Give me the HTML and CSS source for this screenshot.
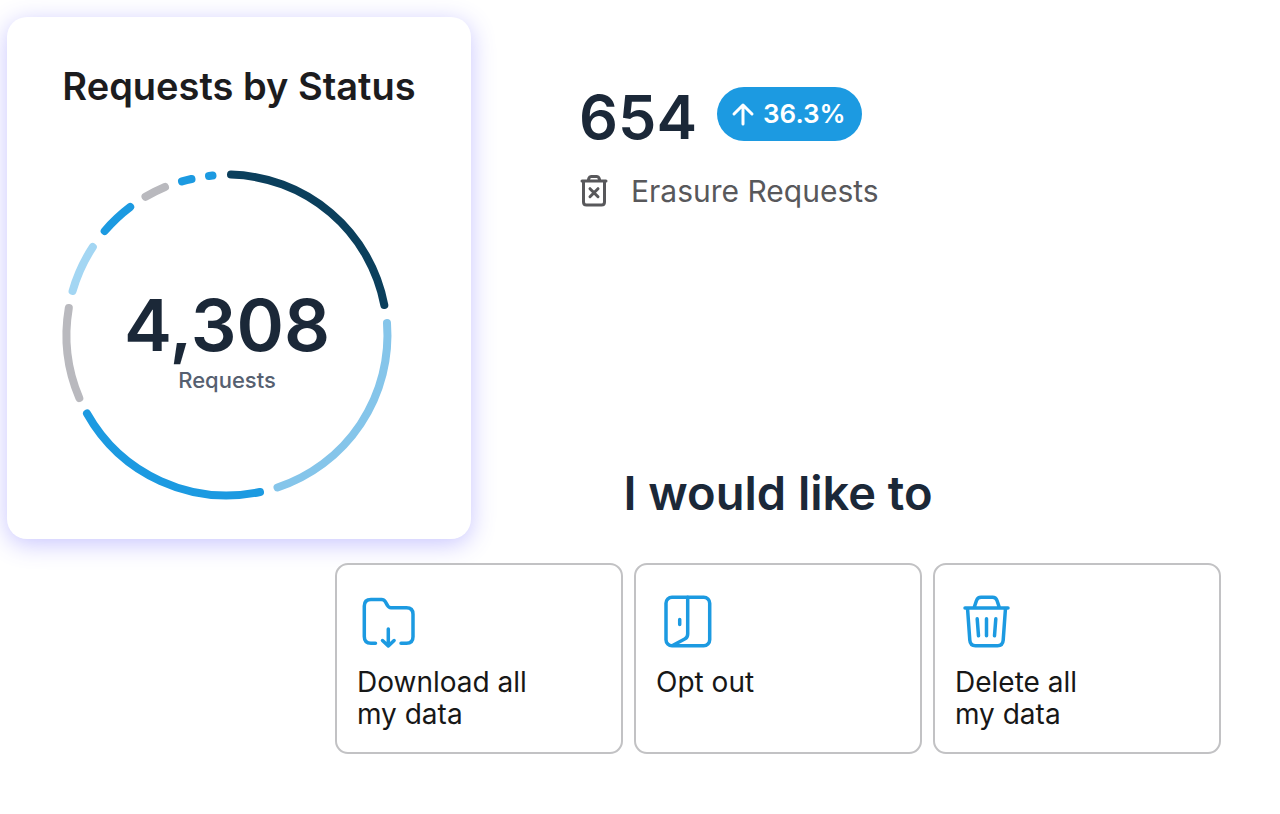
FILE: index.html
```html
<!DOCTYPE html>
<html lang="en">
<head>
<meta charset="utf-8">
<meta name="viewport" content="width=device-width, initial-scale=1">
<title>Privacy requests</title>
<link rel="stylesheet" href="styles.css">
</head>
<body>
<main class="page">
  <section class="status-card">
    <h2 class="status-title">Requests by Status</h2>
    <div class="ring">
      <svg class="ring-chart" viewBox="-164 -164 328 328" aria-hidden="true">
        <path class="seg navy" d="M4-160.4A160.5 160.5 0 0 1 157.3-30"/>
        <path class="seg sky" d="M160-12A160.5 160.5 0 0 1 50.5 152.5"/>
        <path class="seg blue" d="M33 157A160.5 160.5 0 0 1-140 78.5"/>
        <path class="seg gray" d="M-147.7 63A160.5 160.5 0 0 1-158.2-27"/>
        <path class="seg pale" d="M-154.4-44A160.5 160.5 0 0 1-134.2-88"/>
        <path class="seg blue" d="M-122.3-104A160.5 160.5 0 0 1-96.8-128"/>
        <path class="seg gray" d="M-81.5-138.2A160.5 160.5 0 0 1-62-148"/>
        <path class="seg blue" d="M-45-153.6A160.5 160.5 0 0 1-35.5-156"/>
        <path class="seg blue" d="M-18-159A160.5 160.5 0 0 1-14.5-159.4"/>
      </svg>
      <div class="ring-text">
        <span class="ring-value">4,308</span>
        <span class="ring-label">Requests</span>
      </div>
    </div>
  </section>

  <section class="stat">
    <div class="stat-row">
      <span class="stat-value">654</span>
      <span class="pill">
        <svg class="pill-arrow" viewBox="0 0 24 24" aria-hidden="true"><path d="M12 22V3M3 12l9-9 9 9"/></svg>
        36.3%
      </span>
    </div>
    <div class="stat-label">
      <svg class="stat-icon" viewBox="0 0 32 32" aria-hidden="true">
        <path d="M3 6h24M9 6l1-3q.5-1.500 2-1.500h6q1.500 0 2 1.500l1 3M4.500 6v21q0 3 3 3h15q3 0 3-3V6M11 13.700l8 8M19 13.700l-8 8"/>
      </svg>
      Erasure Requests
    </div>
  </section>

  <section class="choices">
    <h1 class="choices-title">I would like to</h1>
    <div class="choice-list">
      <button class="choice" type="button">
        <svg class="choice-icon" viewBox="0 0 64 64" aria-hidden="true">
          <path d="M18.500 53.300H14q-6.700 0-6.700-6.700V16q0-6.500 6.700-6.500h10.500q2.500 0 3.800 2.200l2.200 3.800q1.200 2.200 3.500 2.200h15.500q6.500 0 6.500 6.500v22.600q0 6.500-6.500 6.500H44M31.300 39v17M25.500 50.500l5.800 5.500 5.800-5.500"/>
        </svg>
        <span>Download all<br>my data</span>
      </button>
      <button class="choice" type="button">
        <svg class="choice-icon" viewBox="0 0 64 64" aria-hidden="true">
          <rect x="10" y="7.300" width="43.700" height="48.400" rx="6"/>
          <path d="M31.700 7.300v36.700q0 3.500-3 5L17 55.200M23.700 29.500v5"/>
        </svg>
        <span>Opt out</span>
      </button>
      <button class="choice" type="button">
        <svg class="choice-icon" viewBox="0 0 64 64" aria-hidden="true">
          <path d="M10 18h43M19 18l2.500-7.500q1.200-3.200 4.500-3.200h11.500q3.300 0 4.500 3.200L44.500 18M12.500 18l2.300 32.200q.4 5.500 5.700 5.500h22q5.300 0 5.700-5.500L50.500 18M22.200 28.800l1.300 17M31.500 28.800v17M40.800 28.800l-1.300 17"/>
        </svg>
        <span>Delete all<br>my data</span>
      </button>
    </div>
  </section>
</main>
</body>
</html>
```
FILE: styles.css
```css
*, *::before, *::after {
  box-sizing: border-box;
}

body {
  margin: 0;
  background: #fff;
  color: #1b2838;
  font-family: Inter, "Liberation Sans", sans-serif;
}

.page {
  display: grid;
  grid-template-columns: 328px 136px minmax(0, 1fr);
  grid-template-rows: 444px auto auto;
  padding: 17px 59px 60px 7px;
}

/* Status card */
.status-card {
  z-index: 0;
  grid-column: 1 / 3;
  grid-row: 1 / 3;
  align-self: start;
  padding: 45px 52px 40px;
  border-radius: 20px;
  background: #fff;
  box-shadow: 0 5px 24px rgba(84, 76, 255, 0.32);
}

.status-title {
  margin: 0 0 61px;
  color: #1c1c1e;
  font-size: 38px;
  font-weight: 600;
  line-height: 48px;
  text-align: center;
  white-space: nowrap;
}

.ring {
  display: grid;
  width: 328px;
  margin-left: 4px;
}

.ring-chart,
.ring-text {
  grid-area: 1 / 1;
}

.ring-chart {
  display: block;
  width: 100%;
  overflow: visible;
}

.seg {
  fill: none;
  stroke-width: 8;
  stroke-linecap: round;
}

.navy { stroke: #0b3f5c; }
.sky { stroke: #85c5ea; }
.blue { stroke: #1c9ae1; }
.gray { stroke: #b9b9be; }
.pale { stroke: #a3d6f3; }

.ring-text {
  display: flex;
  flex-direction: column;
  align-items: center;
  justify-content: center;
  gap: 6px;
  padding-top: 12px;
}

.ring-value {
  font-size: 72px;
  font-weight: 600;
  line-height: 72px;
}

.ring-label {
  color: #566070;
  font-size: 22px;
  font-weight: 500;
  line-height: 26px;
}

/* Erasure statistic */
.stat {
  grid-column: 3;
  grid-row: 1;
  padding: 70px 0 0 108px;
}

.stat-row {
  display: flex;
  align-items: flex-start;
  gap: 20px;
}

.stat-value {
  font-size: 61px;
  font-weight: 600;
  line-height: 60px;
}

.pill {
  display: flex;
  align-items: center;
  gap: 8px;
  padding: 0 16px 0 14px;
  border-radius: 27px;
  background: #1c9ae1;
  color: #fff;
  font-size: 26px;
  font-weight: 600;
  line-height: 54px;
}

.pill-arrow {
  width: 24px;
  fill: none;
  stroke: currentColor;
  stroke-width: 3;
  stroke-linecap: round;
  stroke-linejoin: round;
}

.stat-label {
  display: flex;
  align-items: center;
  gap: 20px;
  margin-top: 24px;
  color: #58585b;
  font-size: 30px;
  line-height: 40px;
}

.stat-icon {
  width: 32px;
  fill: none;
  stroke: currentColor;
  stroke-width: 3;
  stroke-linecap: round;
  stroke-linejoin: round;
  overflow: visible;
}

/* Request choices */
.choices {
  z-index: 1;
  grid-column: 2 / 4;
  grid-row: 2 / 4;
}

.choices-title {
  margin: 0 0 38px;
  font-size: 47px;
  font-weight: 600;
  line-height: 64px;
  text-align: center;
}

.choice-list {
  display: grid;
  grid-template-columns: repeat(3, minmax(0, 1fr));
  gap: 11px;
}

.choice {
  display: flex;
  flex-direction: column;
  align-items: flex-start;
  gap: 12px;
  padding: 25px 20px 22px;
  border: 2px solid #c2c2c4;
  border-radius: 13px;
  background: #fff;
  color: #171717;
  font: inherit;
  font-size: 28px;
  line-height: 32px;
  text-align: left;
}

.choice-icon {
  width: 64px;
  fill: none;
  stroke: #1c9ae1;
  stroke-width: 3.5;
  stroke-linecap: round;
  stroke-linejoin: round;
}
```
